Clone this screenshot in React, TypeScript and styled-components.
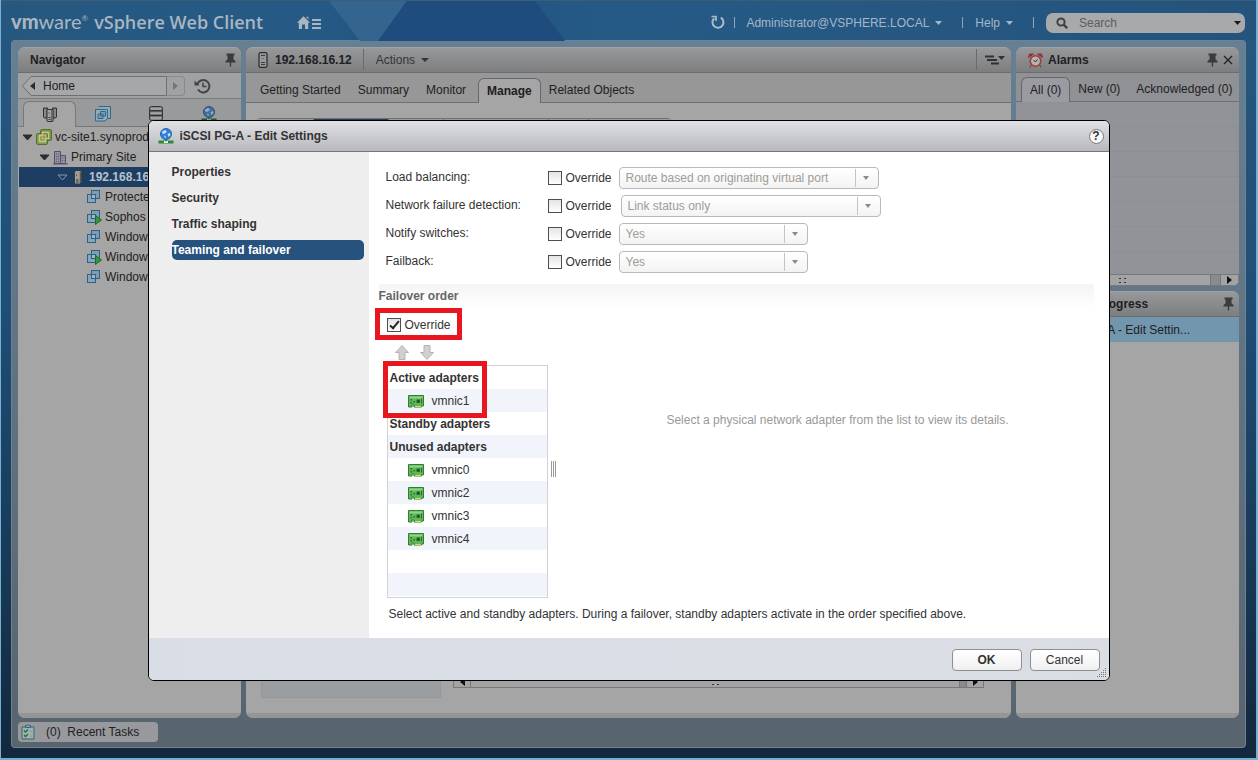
import React from "react";
import styled, { createGlobalStyle, css } from "styled-components";

const Global = createGlobalStyle`
  *, *::before, *::after { box-sizing: border-box; }
  html, body { margin: 0; height: 100%; }
  body {
    font-family: "Liberation Sans", Arial, sans-serif;
    font-size: 12px;
    line-height: 20px;
    color: #1f2023;
  }
  button, input, select { font: inherit; color: inherit; }
  button { padding: 0; border: 0; background: none; }
  ul { list-style: none; margin: 0; padding: 0; }
  h1, h2, h3, p { margin: 0; font-size: inherit; font-weight: inherit; }
  svg { display: block; flex: none; }
  a { color: inherit; text-decoration: none; }
`;

/* ---------- page shell ---------- */

const Page = styled.div`
  position: relative;
  display: flex;
  flex-direction: column;
  min-height: 100vh;
  border: solid #74b0d2;
  border-width: 0 2px 2px 1px;
  background: linear-gradient(#27587f, #1f4e77 40%, #193c5b 70%, #12283c);
  overflow: hidden;
`;

const TopBar = styled.header`
  position: relative;
  display: flex;
  align-items: center;
  height: 40px;
  padding: 4px 11px 0 10px;
  border-top: 1px solid #3c5d77;
  color: #a3b7c7;
  background: linear-gradient(90deg, #26587f, #265a86 25%, #1f5080 34%, #265a86 48%, #24547c);
`;

const Backdrop = styled.svg`
  position: absolute;
  left: 0;
  top: 0;
`;

const Brand = styled.h1`
  position: relative;
  display: flex;
  align-items: baseline;
  gap: 6px;
  height: 32px;
  font-family: "Open Sans", "Noto Sans", sans-serif;
  font-size: 18px;
  line-height: 28px;
  font-weight: 600;
  color: #a9b6c0;
  white-space: nowrap;
`;

const Logo = styled.span`
  font-family: "Lato", sans-serif;
  font-size: 20px;
  font-weight: 400;
  b { font-weight: 900; }
  sup { font-size: 8px; line-height: 8px; }
`;

const HomeButton = styled.button`
  position: relative;
  margin-left: 34px;
`;

const TopTools = styled.div`
  position: relative;
  display: flex;
  align-items: center;
  gap: 8px;
  margin-left: auto;
`;

const TopMenu = styled.button`
  display: flex;
  align-items: center;
  gap: 6px;
  white-space: nowrap;
`;

const TopDivider = styled.span<{ $wide?: boolean }>`
  width: 1px;
  height: 11px;
  margin: ${(p) => (p.$wide ? "0 4px 0 12px" : "0 3px 0 1px")};
  background: #91a7b8;
`;

const SearchBox = styled.label`
  display: flex;
  align-items: center;
  width: 199px;
  height: 20px;
  padding: 0 4px 0 10px;
  border-radius: 7px;
  background: #a8a9aa;
  input {
    flex: 1;
    min-width: 0;
    margin-left: 11px;
    padding: 0;
    border: 0;
    outline: 0;
    background: transparent;
  }
  input::placeholder { color: #5c5d5f; opacity: 1; }
`;

const Frame = styled.div`
  flex: 1;
  display: flex;
  flex-direction: column;
  margin: 0 10px 10px;
  padding: 6px 6px 5px;
  border: 1px solid #71818e;
  border-top-color: #6a8497;
  border-radius: 4px;
  background: linear-gradient(#667f93, #5f7180 55%, #58646e);
`;

const Columns = styled.main`
  flex: 1;
  display: grid;
  grid-template-columns: 223px minmax(0, 1fr) 223px;
  gap: 5px;
`;

const Stack = styled.div`
  display: flex;
  flex-direction: column;
  gap: 5px;
`;

const Panel = styled.section<{ $grow?: boolean; $tone?: string }>`
  display: flex;
  flex-direction: column;
  min-width: 0;
  ${(p) => p.$grow && "flex: 1;"}
  border-radius: 7px;
  overflow: hidden;
  background: ${(p) => p.$tone || "#a5a5a5"};
`;

const PanelHead = styled.header`
  display: flex;
  align-items: center;
  height: 26px;
  padding: 0 5px 0 12px;
  border-top: 1px solid #a0a2a4;
  border-bottom: 1px solid #6c6d6f;
  background: linear-gradient(#97989a, #7d7e80);
  white-space: nowrap;
`;

const PanelTitle = styled.h2<{ $gap?: number }>`
  margin-left: ${(p) => p.$gap || 0}px;
  font-weight: bold;
`;

const HeadTools = styled.div`
  display: flex;
  align-items: center;
  gap: 4px;
  height: 100%;
  margin-left: auto;
`;

const HeadSeparator = styled.span`
  align-self: stretch;
  width: 1px;
  margin: 1px 3px 2px 11px;
  background: #6a6b6d;
`;

const ActionsMenu = styled(TopMenu)`
  margin-left: 9px;
  color: #333436;
`;

const PanelFoot = styled.div`
  height: 5px;
  margin-top: auto;
  background: #959595;
`;

/* ---------- navigator ---------- */

const HistoryBar = styled.div`
  display: flex;
  align-items: center;
  height: 26px;
  padding: 0 4px;
  border-bottom: 1px solid #7c7d7f;
  background: #a0a1a3;
`;

const HomeCrumb = styled.button`
  position: relative;
  display: flex;
  align-items: center;
  width: 145px;
  height: 20px;
  padding-left: 21px;
  svg { position: absolute; left: 0; top: 0; }
  span { position: relative; }
`;

const ForwardButton = styled.button`
  display: flex;
  align-items: center;
  justify-content: center;
  width: 18px;
  height: 20px;
  margin-right: 9px;
  border: 1px solid #88898b;
  border-left: 0;
  border-radius: 0 4px 4px 0;
`;

const IconTabs = styled.div`
  display: flex;
  align-items: flex-end;
  height: 28px;
  padding-left: 5px;
  border-bottom: 1px solid #77787a;
  background: #999a9c;
`;

const IconTab = styled.button<{ $on?: boolean }>`
  display: flex;
  align-items: center;
  justify-content: center;
  width: 53px;
  height: 25px;
  ${(p) =>
    p.$on &&
    css`
      height: 26px;
      margin-bottom: -1px;
      border: 1px solid #77787a;
      border-bottom: 0;
      border-radius: 6px 6px 0 0;
      background: #a5a5a5;
    `}
`;

const Tree = styled.ul`
  flex: 1;
`;

const TreeRow = styled.li<{ $indent: number; $on?: boolean }>`
  display: flex;
  align-items: center;
  height: 20px;
  padding-left: ${(p) => p.$indent}px;
  white-space: nowrap;
  svg + svg { margin-left: 3px; }
  span { margin-left: 3px; }
  ${(p) =>
    p.$on &&
    css`
      color: #b7c2cc;
      font-weight: bold;
      background: #1d3e62;
      margin-left: 1px;
      svg + svg { margin-left: 5px; }
      span { margin-left: 6px; }
    `}
`;

/* ---------- centre ---------- */

const Tabs = styled.nav<{ $small?: boolean }>`
  display: flex;
  align-items: flex-end;
  height: ${(p) => (p.$small ? 29 : 30)}px;
  padding-left: ${(p) => (p.$small ? 5 : 2)}px;
  border-bottom: 1px solid #6f7072;
  background: ${(p) => (p.$small ? "#909195" : "#979797")};
`;

const Tab = styled.a<{ $on?: boolean; $bold?: boolean; $pad?: number }>`
  height: 24px;
  padding: 0 ${(p) => p.$pad || 8}px;
  line-height: 24px;
  white-space: nowrap;
  ${(p) =>
    p.$on &&
    css`
      height: 25px;
      margin-bottom: -1px;
      border: 1px solid #66676a;
      border-bottom: 0;
      border-radius: 6px 6px 0 0;
      background: ${p.$bold ? "#a5a5a5" : "#9a9ba0"};
    `}
  ${(p) => p.$bold && "font-weight: bold;"}
`;

const CentreBody = styled.div`
  flex: 1;
  display: flex;
  flex-direction: column;
  justify-content: space-between;
  padding: 15px 27px 15px 11px;
`;

const Segments = styled.div`
  display: flex;
  width: 414px;
  height: 20px;
  border: 1px solid #707174;
  border-radius: 3px;
`;

const Segment = styled.span<{ $w: number; $on?: boolean }>`
  flex: ${(p) => p.$w};
  border-right: 1px solid #707174;
  background: ${(p) => (p.$on ? "#1d3e62" : "#9b9b9b")};
  &:last-child { border-right: 0; }
`;

const CentreFoot = styled.div`
  display: flex;
  align-items: flex-start;
  gap: 12px;
  padding-left: 4px;
`;

const Block = styled.div`
  width: 180px;
  height: 30px;
  border: 1px solid #94989b;
  background: #9a9ea1;
`;

const Scrollbar = styled.div<{ $grow?: boolean }>`
  display: flex;
  align-items: stretch;
  height: 12px;
  ${(p) => p.$grow && "flex: 1; margin-top: 8px;"}
  border: 1px solid #77787a;
  background: #a3a3a3;
`;

const ScrollCell = styled.span<{ $w?: number; $dark?: boolean }>`
  display: flex;
  align-items: center;
  justify-content: center;
  ${(p) => (p.$w ? `width: ${p.$w}px;` : "flex: 1;")}
  border-right: 1px solid #77787a;
  ${(p) => p.$dark && "background: #8a8b8c;"}
  &:last-child { border-right: 0; }
`;

/* ---------- right column ---------- */

const AlarmRows = styled.div`
  display: grid;
  grid-auto-rows: 25px;
  height: 172px;
  overflow: hidden;
  background: #929398;
`;

const AlarmRow = styled.div`
  border-bottom: 1px solid #8e8f94;
`;

const WorkItem = styled.div`
  height: 25px;
  padding: 3px 0 0 36px;
  background: #7196ad;
  white-space: nowrap;
`;

const TaskStrip = styled.footer`
  display: flex;
  padding-top: 4px;
`;

const TaskButton = styled.button`
  display: flex;
  align-items: center;
  width: 140px;
  height: 20px;
  padding-left: 3px;
  border-radius: 4px;
  background: #97999c;
  white-space: pre;
  span { margin-left: 11px; }
`;

/* ---------- dialog ---------- */

const Overlay = styled.div`
  position: absolute;
  inset: 0;
  display: flex;
  justify-content: center;
  align-items: flex-start;
  padding: 120px 24px 0;
`;

const Dialog = styled.div`
  display: flex;
  flex-direction: column;
  width: 100%;
  max-width: 962px;
  border: 1px solid #000;
  border-radius: 6px;
  overflow: hidden;
  background: #fff;
  color: #333;
`;

const DialogHead = styled.header`
  display: flex;
  align-items: center;
  gap: 6px;
  height: 31px;
  padding: 0 5px 0 9px;
  border-bottom: 1px solid #77787a;
  background: linear-gradient(#e0e1e5, #b8b9bd);
  h2 { font-weight: bold; }
`;

const HelpButton = styled.button`
  width: 15px;
  height: 15px;
  margin-left: auto;
  border: 1px solid #77787a;
  border-radius: 50%;
  background: #f8f8f8;
  font-weight: bold;
  line-height: 13px;
`;

const DialogBody = styled.div`
  display: flex;
  min-height: 486px;
`;

const SideNav = styled.nav`
  flex: none;
  display: flex;
  flex-direction: column;
  gap: 6px;
  width: 220px;
  padding: 10px 5px 10px 23px;
  background: #eee;
`;

const SideLink = styled.a<{ $on?: boolean }>`
  height: 20px;
  border-radius: 5px;
  font-weight: bold;
  ${(p) => p.$on && "color: #fff; background: #28527e;"}
`;

const Content = styled.div`
  flex: 1;
  min-width: 0;
  padding: 11px 15px 10px 10px;
`;

const FieldGrid = styled.div`
  display: grid;
  grid-template-columns: 162px 71px auto;
  grid-auto-rows: 28px;
  justify-content: start;
  align-items: center;
  padding: 1px 0 0 7px;
`;

const FieldName = styled.span`
  height: 22px;
`;

const Check = styled.label`
  display: flex;
  align-items: center;
  gap: 4px;
`;

const Box = styled.input`
  appearance: none;
  position: relative;
  width: 14px;
  height: 14px;
  margin: 0;
  border: 1px solid #4e4e4e;
  background: linear-gradient(#e4e4e4, #fff);
  &:checked::after {
    content: "";
    position: absolute;
    left: 4px;
    top: 0;
    width: 5px;
    height: 10px;
    border: solid #222;
    border-width: 0 2px 2px 0;
    transform: rotate(40deg);
  }
`;

const Picker = styled.div<{ $w: number; $shift?: boolean }>`
  position: relative;
  width: ${(p) => p.$w}px;
  margin-left: ${(p) => (p.$shift ? 2 : 0)}px;
  select {
    appearance: none;
    display: block;
    width: 100%;
    height: 22px;
    padding: 0 26px 0 6px;
    border: 1px solid #b9b9b9;
    border-radius: 4px;
    background: linear-gradient(#fff, #f3f3f3);
    color: #a09c98;
    opacity: 1;
  }
  svg {
    position: absolute;
    right: 0;
    top: 0;
    pointer-events: none;
  }
`;

const SectionHead = styled.h3`
  height: 24px;
  margin-top: 8px;
  color: #666;
  font-weight: bold;
  line-height: 24px;
  background: linear-gradient(#f4f4f4, #fff);
`;

const Marked = styled.div`
  position: relative;
`;

const RedFrame = styled.span<{ $top: number; $left: number; $w: number; $h: number }>`
  position: absolute;
  top: ${(p) => p.$top}px;
  left: ${(p) => p.$left}px;
  width: ${(p) => p.$w}px;
  height: ${(p) => p.$h}px;
  border: 5px solid #e8161f;
  pointer-events: none;
`;

const OverrideRow = styled(Marked)`
  height: 36px;
  padding: 7px 0 0 8px;
`;

const MoveButtons = styled.div`
  display: flex;
  align-items: flex-start;
  gap: 11px;
  height: 21px;
  padding: 1px 0 0 16px;
`;

const Split = styled.div`
  display: flex;
  height: 233px;
  padding-left: 8px;
`;

const AdapterList = styled.ul`
  width: 161px;
  height: 100%;
  border: 1px solid #d0d3d6;
  overflow: hidden;
`;

const AdapterRow = styled.li<{ $head?: boolean; $alt?: boolean }>`
  display: flex;
  align-items: center;
  gap: 8px;
  height: 23px;
  padding-left: ${(p) => (p.$head ? 2 : 20)}px;
  font-weight: ${(p) => (p.$head ? "bold" : "normal")};
  background: ${(p) => (p.$alt ? "#f1f4fa" : "#fff")};
  svg { margin-top: 2px; }
`;

const Grip = styled.span`
  align-self: center;
  width: 5px;
  height: 16px;
  margin: 0 0 25px 3px;
  background: repeating-linear-gradient(90deg, #9a9a9a 0 1px, #fff 1px 2px);
`;

const EmptyDetail = styled.p`
  flex: 1;
  padding: 45px 0 0 26px;
  text-align: center;
  color: #999;
`;

const Hint = styled.p`
  padding: 6px 0 0 10px;
`;

const DialogFoot = styled.footer`
  position: relative;
  display: flex;
  justify-content: flex-end;
  gap: 8px;
  height: 42px;
  padding: 11px 9px 0;
  background: linear-gradient(90deg, #d9dee6, #dadde4);
`;

const ResizeMark = styled.svg`
  position: absolute;
  right: 2px;
  bottom: 2px;
`;

const PushButton = styled.button<{ $primary?: boolean }>`
  width: 70px;
  height: 22px;
  border: 1px solid #8d8f92;
  border-radius: 4px;
  background: linear-gradient(#fff, #f0f0f0);
  font-weight: ${(p) => (p.$primary ? "bold" : "normal")};
`;

/* ---------- icons ---------- */

const Caret = ({ color = "#a3b7c7", w = 7, h = 4 }: { color?: string; w?: number; h?: number }) => (
  <svg width={w} height={h} viewBox="0 0 8 4" preserveAspectRatio="none">
    <path d="M0 0h8L4 4z" fill={color} />
  </svg>
);

const RightArrow = ({ color, flip }: { color: string; flip?: boolean }) => (
  <svg width="5" height="8" viewBox="0 0 5 8">
    <path d={flip ? "M5 0v8L0 4z" : "M0 0v8l5-4z"} fill={color} />
  </svg>
);

const PinIcon = () => (
  <svg width="11" height="14" viewBox="0 0 11 14" fill="#3a3b3d">
    <path d="M1.500 0.500h8v2h-1v4l2 1.500v1.500h-4.300v4h-1.400v-4H0.500v-1.500l2-1.500v-4h-1z" />
  </svg>
);

const CloseIcon = () => (
  <svg width="12" height="12" viewBox="0 0 12 12" stroke="#252628" strokeWidth="1.400">
    <path d="M2 2l8 8M10 2l-8 8" />
  </svg>
);

const HomeIcon = () => (
  <svg width="25" height="14" viewBox="0 0 25 14" fill="#a9b6c0">
    <path d="M6.500 0.300L13 6.700h-1.800V13H8V8.500H5V13H1.800V6.700H0zM9.500 0.800h1.800v2.600l-1.800-1.800zM15 3h9v2h-9zM15 7h9v2h-9zM15 11h9v2h-9z" />
  </svg>
);

const RefreshIcon = () => (
  <svg width="14" height="15" viewBox="0 0 14 15" fill="none" stroke="#a9bccb" strokeWidth="2">
    <path d="M9.800 2.600A5.500 5.500 0 1 1 3.300 3.200" />
    <path d="M0.500 1.500h4.500v4.500" strokeWidth="1.700" />
  </svg>
);

const SearchIcon = () => (
  <svg width="12" height="12" viewBox="0 0 12 12" fill="none" stroke="#3f4043" strokeWidth="2">
    <circle cx="5" cy="5" r="3.600" />
    <path d="M7.700 7.700l3.500 3.500" strokeWidth="2.400" />
  </svg>
);

const HistoryIcon = () => (
  <svg width="18" height="16" viewBox="0 0 18 16" fill="none" stroke="#424346" strokeWidth="2">
    <path d="M3.300 6.500A6.200 6.200 0 1 1 4 11.500" />
    <path d="M0.500 2.500v5h5z" fill="#424346" stroke="none" />
    <path d="M9 4.500v4h3.500" strokeWidth="1.500" />
  </svg>
);

const ServerIcon = ({ solid }: { solid?: boolean }) =>
  solid ? (
    <svg width="10" height="16" viewBox="0 0 10 16">
      <path d="M1.500 3l1.500-1.500h5.500v12L7 15H1.500z" fill="#a09c97" stroke="#3b3a39" />
      <path d="M7.500 2.500v11.500" stroke="#5b5855" strokeWidth="1.500" />
      <path d="M3 6h1M3 11h2.500M3 13h2.500" stroke="#333" />
    </svg>
  ) : (
    <svg width="10" height="16" viewBox="0 0 10 16">
      <rect x="1" y="0.700" width="8" height="14.600" rx="1.500" fill="#97989a" stroke="#2d2e30" strokeWidth="1.300" />
      <path d="M3 3.500h4M4.500 6.500h1M3 10.500h4M3 12.500h4" stroke="#3b3c3e" />
    </svg>
  );

const HostsIcon = () => (
  <svg width="14" height="15" viewBox="0 0 14 15">
    <path d="M0.500 1h4v10h-3l-1-1zM9.500 1h4v9l-1 1h-3z" fill="#6c6d6f" stroke="#303133" />
    <path d="M2 2v8M12 2v8" stroke="#a3a4a6" />
    <rect x="4" y="2.500" width="6" height="12" rx="0.500" fill="#a3a4a6" stroke="#303133" />
    <path d="M8.500 3v11" stroke="#66676a" />
    <path d="M5.500 6h1M5.500 10.500h2M5.500 12.500h2" stroke="#303133" />
  </svg>
);

const VmIcon = ({ running }: { running?: boolean }) => (
  <svg width="16" height="16" viewBox="0 0 16 16" fill="#7d9db5" stroke="#2f6186">
    <rect x="5.500" y="1.500" width="8" height="8" />
    <rect x="1.500" y="5.500" width="8" height="8" fill="#86a5bb" />
    <rect x="5.500" y="5.500" width="4" height="4" fill="#9fb6c7" />
    {running && <path d="M9.500 6.500v9l6-4.500z" fill="#35953d" stroke="#1e6d27" />}
  </svg>
);

const VmTabIcon = () => (
  <svg width="16" height="16" viewBox="0 0 16 16" fill="#93aab9" stroke="#33678b">
    <path d="M3.500 0.500h12v12h-3" />
    <path d="M0.500 3.500h12v9l-2.500 2.500H0.500z" />
    <path d="M5.500 5.500h5v4.500h-5zM3 8h5v4.500H3z" fill="#7d9db5" />
  </svg>
);

const StorageIcon = () => (
  <svg width="14" height="15" viewBox="0 0 14 15" stroke="#333436">
    <rect x="0.500" y="0.500" width="13" height="14" rx="2" fill="#858687" />
    <path d="M1 4.800h12M1 9.500h12" strokeWidth="1.500" />
    <path d="M2 3h10M2 7.200h10M2 12h10" stroke="#a9aaab" strokeWidth="1.400" />
  </svg>
);

const GlobeIcon = ({ dim }: { dim?: boolean }) => (
  <svg width="16" height="16" viewBox="0 0 16 16">
    <circle cx="8" cy="6" r="5.500" fill={dim ? "#416d99" : "#2f7ed8"} stroke={dim ? "#2d4f74" : "#2667b4"} />
    <path d="M4 3.500l3-1.500 2 1.500-2 2-2.500.5zM9.500 6l2.500-1 .5 2-2 2zM6 7.500l2 1-1 2z" fill={dim ? "#93aecb" : "#c4e2fb"} />
    <path d="M0.500 14h15" stroke={dim ? "#1f5b2a" : "#2a8b34"} strokeWidth="3" />
    <path d="M6 13h4v2H6z" fill={dim ? "#97b29a" : "#e4f6e4"} />
    <path d="M8 11.500v2" stroke="#2a5c33" />
  </svg>
);

const VcenterIcon = () => (
  <svg width="16" height="16" viewBox="0 0 16 16">
    <rect x="4.500" y="0.500" width="11" height="11" rx="1.500" fill="#7d9744" stroke="#55702a" />
    <rect x="0.500" y="4.500" width="11" height="11" rx="1.500" fill="#869e4c" stroke="#55702a" />
    <path d="M5 5h6v6H5z" fill="#869e4c" />
    <path d="M6.500 3.500h6v6h-6zM3.500 6.500h6v6h-6z" fill="none" stroke="#c3c7a0" strokeWidth="1.300" />
    <path d="M6.500 6.500h3v3h-3z" fill="#bf8a2b" />
  </svg>
);

const SiteIcon = () => (
  <svg width="15" height="15" viewBox="0 0 15 15" fill="#9391a0" stroke="#55536a">
    <path d="M1.500 1.500h6v12h-6zM7.500 5.500h5v8h-5z" />
    <path d="M3 4h3M3 6.500h3M3 9h3M3 11.500h3M9 8h2.500M9 10.500h2.500" strokeDasharray="1 1" />
    <path d="M0 14h15" />
  </svg>
);

const TreeCaret = ({ hollow }: { hollow?: boolean }) => (
  <svg width="11" height="8" viewBox="0 0 11 8">
    <path d="M1 2h9L5.500 7z" fill={hollow ? "none" : "#2c2d2f"} stroke={hollow ? "#8598ab" : "#2c2d2f"} />
  </svg>
);

const AlarmIcon = () => (
  <svg width="15" height="15" viewBox="0 0 15 15">
    <path d="M0.500 4.500l1-3.500h4zM14.500 4.500l-1-3.500h-4zM3 12l-1 2.500M12 12l1 2.500" fill="#8d3434" stroke="#8d3434" />
    <circle cx="7.500" cy="8" r="5.300" fill="#b6b0ae" stroke="#9b3c3a" strokeWidth="1.600" />
    <path d="M5.500 7l2 2 2-2.500" fill="none" stroke="#333" />
  </svg>
);

const ListMenuIcon = () => (
  <svg width="22" height="10" viewBox="0 0 22 10">
    <path d="M1 1.500h9M3 5h10M7 8.500h8" stroke="#303133" strokeWidth="1.800" />
    <path d="M14 1h7l-3.500 4z" fill="#303133" />
  </svg>
);

const ClipboardIcon = () => (
  <svg width="14" height="16" viewBox="0 0 14 16" fill="none">
    <path d="M1 3h12v12H1z" fill="#9fb0b0" stroke="#35686f" />
    <path d="M4.500 3.500V1.500h1.500L7 0.500l1 1h1.500v2z" fill="#7ba3b5" stroke="#35687f" />
    <path d="M3 6.500l1.500 1.500L7 5.500M3 11l1.500 1.500L7 10" stroke="#236b38" strokeWidth="1.300" />
    <path d="M9 7.500h2.500M9 12h2.500" stroke="#7f9a9c" />
  </svg>
);

const NicIcon = () => (
  <svg width="16" height="13" viewBox="0 0 16 13">
    <path d="M0.500 0.500h15v10.500h-2v1H6v-2H4v2H0.500z" fill="#5fb855" stroke="#2d8033" />
    <path d="M1.500 1.500h13v2h-13z" fill="#8ed484" />
    <path d="M7 11.500h6" stroke="#d6dd55" />
    <path d="M2.500 4h1.500v1.500H2.500zM2.500 7h1.500v1.500H2.500zM5.500 6h1.500v1.500H5.500zM8.500 4.500h3.500V8H8.500z" fill="#2f6b33" />
    <path d="M9.500 5.500h1.500v1.500H9.500z" fill="#163c19" />
    <path d="M13.500 3.500v5" stroke="#2f6b33" />
  </svg>
);

const MoveArrow = ({ down }: { down?: boolean }) => (
  <svg width="14" height="15" viewBox="0 0 14 15" fill="#d0d0d0" stroke="#b4b4b4">
    <path d={down ? "M4 0.500h6v7h3.500L7 14.500 0.500 7.500H4z" : "M4 14.500h6v-7h3.500L7 0.500 0.500 7.500H4z"} />
  </svg>
);

const Dots = () => (
  <svg width="7" height="5" viewBox="0 0 7 5" fill="#333">
    <path d="M0 0h2v1H0zM5 0h2v1H5zM0 4h2v1H0zM5 4h2v1H5z" />
  </svg>
);

/* ---------- data and parts ---------- */

const fields = [
  { name: "Load balancing:", value: "Route based on originating virtual port", width: 260 },
  { name: "Network failure detection:", value: "Link status only", width: 260, shift: true },
  { name: "Notify switches:", value: "Yes", width: 189 },
  { name: "Failback:", value: "Yes", width: 189 },
];

const adapters = [
  { label: "Active adapters", head: true },
  { label: "vmnic1" },
  { label: "Standby adapters", head: true },
  { label: "Unused adapters", head: true },
  { label: "vmnic0" },
  { label: "vmnic2" },
  { label: "vmnic3" },
  { label: "vmnic4" },
  { label: "" },
  { label: "" },
];

const machines = [
  { name: "Protecte", running: false },
  { name: "Sophos", running: true },
  { name: "Window", running: false },
  { name: "Window", running: true },
  { name: "Window", running: false },
];

function Navigator() {
  return (
    <Panel>
      <PanelHead>
        <PanelTitle>Navigator</PanelTitle>
        <HeadTools>
          <PinIcon />
        </HeadTools>
      </PanelHead>
      <HistoryBar>
        <HomeCrumb>
          <svg width="145" height="20" viewBox="0 0 145 20" fill="#a6a7a9" stroke="#6f7072">
            <path d="M144.500 0.500H9L0.500 10 9 19.500h135.500z" />
            <path d="M13 6v8l-5-4z" fill="#2c2d2f" stroke="none" />
          </svg>
          <span>Home</span>
        </HomeCrumb>
        <ForwardButton aria-label="Forward">
          <RightArrow color="#747577" />
        </ForwardButton>
        <HistoryIcon />
      </HistoryBar>
      <IconTabs>
        <IconTab $on aria-label="Hosts and clusters"><HostsIcon /></IconTab>
        <IconTab aria-label="Virtual machines"><VmTabIcon /></IconTab>
        <IconTab aria-label="Storage"><StorageIcon /></IconTab>
        <IconTab aria-label="Networking"><GlobeIcon dim /></IconTab>
      </IconTabs>
      <Tree>
        <TreeRow $indent={4}>
          <TreeCaret />
          <VcenterIcon />
          <span>vc-site1.synoprod</span>
        </TreeRow>
        <TreeRow $indent={21}>
          <TreeCaret />
          <SiteIcon />
          <span>Primary Site</span>
        </TreeRow>
        <TreeRow $indent={38} $on>
          <TreeCaret hollow />
          <ServerIcon solid />
          <span>192.168.16.12</span>
        </TreeRow>
        {machines.map((m, i) => (
          <TreeRow key={i} $indent={68}>
            <VmIcon running={m.running} />
            <span>{m.name}</span>
          </TreeRow>
        ))}
      </Tree>
      <PanelFoot />
    </Panel>
  );
}

function Centre() {
  return (
    <Panel>
      <PanelHead>
        <ServerIcon />
        <PanelTitle $gap={7}>192.168.16.12</PanelTitle>
        <HeadSeparator />
        <ActionsMenu>
          Actions <Caret color="#333436" w={8} />
        </ActionsMenu>
        <HeadTools>
          <HeadSeparator />
          <ListMenuIcon />
        </HeadTools>
      </PanelHead>
      <Tabs>
        <Tab href="#" $pad={12}>Getting Started</Tab>
        <Tab href="#" $pad={5}>Summary</Tab>
        <Tab href="#" $pad={12}>Monitor</Tab>
        <Tab href="#" $on $bold>Manage</Tab>
        <Tab href="#">Related Objects</Tab>
      </Tabs>
      <CentreBody>
        <Segments>
          <Segment $w={56} />
          <Segment $w={75} $on />
          <Segment $w={55} />
          <Segment $w={106} />
          <Segment $w={40} />
          <Segment $w={82} />
        </Segments>
        <CentreFoot>
          <Block />
          <Scrollbar $grow>
            <ScrollCell $w={17}><RightArrow flip color="#111" /></ScrollCell>
            <ScrollCell><Dots /></ScrollCell>
            <ScrollCell $w={7} $dark />
            <ScrollCell $w={16}><RightArrow color="#111" /></ScrollCell>
          </Scrollbar>
        </CentreFoot>
      </CentreBody>
      <PanelFoot />
    </Panel>
  );
}

function RightColumn() {
  return (
    <Stack>
      <Panel $tone="#929398">
        <PanelHead>
          <AlarmIcon />
          <PanelTitle $gap={5}>Alarms</PanelTitle>
          <HeadTools>
            <PinIcon />
            <CloseIcon />
          </HeadTools>
        </PanelHead>
        <Tabs $small>
          <Tab href="#" $on>All (0)</Tab>
          <Tab href="#">New (0)</Tab>
          <Tab href="#">Acknowledged (0)</Tab>
        </Tabs>
        <AlarmRows>
          {Array.from({ length: 7 }, (_, i) => (
            <AlarmRow key={i} />
          ))}
        </AlarmRows>
        <Scrollbar>
          <ScrollCell $w={17}><RightArrow flip color="#111" /></ScrollCell>
          <ScrollCell><Dots /></ScrollCell>
          <ScrollCell $w={10} $dark />
          <ScrollCell $w={17}><RightArrow color="#111" /></ScrollCell>
        </Scrollbar>
      </Panel>
      <Panel $grow>
        <PanelHead>
          <PanelTitle $gap={21}>Work In Progress</PanelTitle>
          <HeadTools>
            <PinIcon />
          </HeadTools>
        </PanelHead>
        <WorkItem>iSCSI PG-A - Edit Settin...</WorkItem>
        <PanelFoot />
      </Panel>
    </Stack>
  );
}

function EditSettings() {
  return (
    <Dialog role="dialog" aria-labelledby="dialog-title">
      <DialogHead>
        <GlobeIcon />
        <h2 id="dialog-title">iSCSI PG-A - Edit Settings</h2>
        <HelpButton>?</HelpButton>
      </DialogHead>
      <DialogBody>
        <SideNav>
          <SideLink href="#">Properties</SideLink>
          <SideLink href="#">Security</SideLink>
          <SideLink href="#">Traffic shaping</SideLink>
          <SideLink href="#" $on>Teaming and failover</SideLink>
        </SideNav>
        <Content>
          <FieldGrid>
            {fields.map((f) => (
              <React.Fragment key={f.name}>
                <FieldName>{f.name}</FieldName>
                <Check>
                  <Box type="checkbox" />
                  Override
                </Check>
                <Picker $w={f.width} $shift={f.shift}>
                  <select disabled aria-label={f.name}>
                    <option>{f.value}</option>
                  </select>
                  <svg width="24" height="22" viewBox="0 0 24 22">
                    <path d="M0.500 2v18" stroke="#c4c4c4" />
                    <path d="M8 9h6l-3 4z" fill="#8a8a8a" />
                  </svg>
                </Picker>
              </React.Fragment>
            ))}
          </FieldGrid>
          <SectionHead>Failover order</SectionHead>
          <OverrideRow>
            <Check>
              <Box type="checkbox" defaultChecked />
              Override
            </Check>
            <RedFrame $top={0} $left={-4} $w={87} $h={32} />
          </OverrideRow>
          <MoveButtons>
            <button aria-label="Move up"><MoveArrow /></button>
            <button aria-label="Move down"><MoveArrow down /></button>
          </MoveButtons>
          <Marked>
            <Split>
              <AdapterList>
                {adapters.map((a, i) => (
                  <AdapterRow key={i} $head={a.head} $alt={i % 2 === 1}>
                    {!a.head && a.label && <NicIcon />}
                    {a.label}
                  </AdapterRow>
                ))}
              </AdapterList>
              <Grip />
              <EmptyDetail>Select a physical network adapter from the list to view its details.</EmptyDetail>
            </Split>
            <RedFrame $top={-4} $left={4} $w={104} $h={57} />
          </Marked>
          <Hint>
            Select active and standby adapters. During a failover, standby adapters activate in the order specified above.
          </Hint>
        </Content>
      </DialogBody>
      <DialogFoot>
        <PushButton $primary>OK</PushButton>
        <PushButton>Cancel</PushButton>
        <ResizeMark width="10" height="10" viewBox="0 0 10 10" stroke="#77797d" strokeDasharray="1 1">
          <path d="M8 0.500h2M6 2.500h4M4 4.500h6M2 6.500h8M0 8.500h10" />
        </ResizeMark>
      </DialogFoot>
    </Dialog>
  );
}

export default function App() {
  return (
    <>
      <Global />
      <Page>
        <TopBar>
          <Backdrop width="620" height="40" viewBox="0 0 620 40">
            <path d="M328 0h78l-29 40h-18z" fill="#33658f" />
            <path d="M406 0h128l30 40H377z" fill="#1d4c7d" />
          </Backdrop>
          <Brand>
            <Logo><b>vm</b>ware<sup>®</sup></Logo>
            <span>vSphere Web Client</span>
          </Brand>
          <HomeButton aria-label="Home menu"><HomeIcon /></HomeButton>
          <TopTools>
            <button aria-label="Refresh"><RefreshIcon /></button>
            <TopDivider />
            <TopMenu>Administrator@VSPHERE.LOCAL <Caret /></TopMenu>
            <TopDivider $wide />
            <TopMenu>Help <Caret /></TopMenu>
            <TopDivider $wide />
            <SearchBox>
              <SearchIcon />
              <input type="text" placeholder="Search" aria-label="Search" />
              <Caret color="#1a1a1a" />
            </SearchBox>
          </TopTools>
        </TopBar>
        <Frame>
          <Columns>
            <Navigator />
            <Centre />
            <RightColumn />
          </Columns>
          <TaskStrip>
            <TaskButton>
              <ClipboardIcon />
              <span>(0)  Recent Tasks</span>
            </TaskButton>
          </TaskStrip>
        </Frame>
        <Overlay>
          <EditSettings />
        </Overlay>
      </Page>
    </>
  );
}
